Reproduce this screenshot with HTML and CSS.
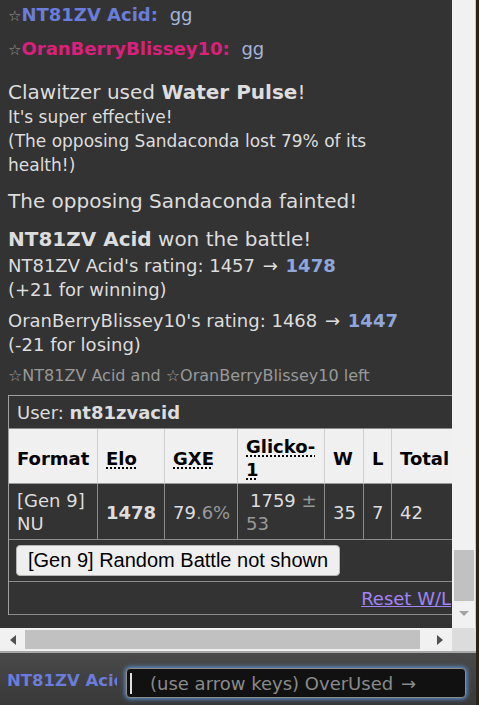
FILE: index.html
```html
<!DOCTYPE html>
<html>
<head>
<meta charset="utf-8">
<link rel="stylesheet" href="styles.css">
</head>
<body>
<div class="app">
  <div class="logpane">
    <div class="logrow">
      <div class="log">
        <div class="inner">
          <div class="chat"><span class="star">☆</span><strong class="blue">NT81ZV Acid:</strong> <em>gg</em></div>
          <div class="chat"><span class="star">☆</span><strong class="pink">OranBerryBlissey10:</strong> <em>gg</em></div>
          <div class="msg m-claw">Clawitzer used <strong>Water Pulse</strong>!<br><small>It's super effective!</small><br><small>(The opposing Sandaconda lost 79% of its health!)</small></div>
          <div class="msg m-faint">The opposing Sandaconda fainted!</div>
          <div class="msg m-won"><strong>NT81ZV Acid</strong> won the battle!</div>
          <div class="raw r1">NT81ZV Acid's rating: 1457 <span class="arr">→</span> <strong class="rate">1478</strong><br>(+21 for winning)</div>
          <div class="raw r2">OranBerryBlissey10's rating: 1468 <span class="arr">→</span> <strong class="rate">1447</strong><br>(-21 for losing)</div>
          <div class="leftmsg">☆NT81ZV Acid and ☆OranBerryBlissey10 left</div>
          <table class="stats">
            <colgroup>
              <col class="c-format"><col class="c-elo"><col class="c-gxe"><col class="c-glicko"><col class="c-w"><col class="c-l"><col class="c-total">
            </colgroup>
            <tr class="user-row"><td colspan="7">User: <strong>nt81zvacid</strong></td></tr>
            <tr class="head-row">
              <th>Format</th>
              <th><abbr class="ab">Elo</abbr></th>
              <th><abbr class="ab">GXE</abbr></th>
              <th><abbr class="ab">Glicko-1</abbr></th>
              <th>W</th>
              <th>L</th>
              <th>Total</th>
            </tr>
            <tr class="data-row">
              <td>[Gen 9] NU</td>
              <td><strong>1478</strong></td>
              <td>79<span class="dim">.6%</span></td>
              <td><span class="glk">1759<span class="dim"> ±</span></span> <span class="dim">53</span></td>
              <td>35</td>
              <td>7</td>
              <td>42</td>
            </tr>
            <tr class="btn-row"><td colspan="7"><button class="hidebtn">[Gen 9] Random Battle not shown</button></td></tr>
            <tr class="reset-row"><td colspan="7"><a class="reset" href="#">Reset W/L</a></td></tr>
          </table>
        </div>
      </div>
      <div class="vscroll">
        <div class="vspace"></div>
        <div class="vthumb"></div>
        <div class="vbtn"><span class="tri-down"></span></div>
      </div>
    </div>
    <div class="hscroll">
      <div class="hbtn"><span class="tri-left"></span></div>
      <div class="hthumb"></div>
      <div class="hspace"></div>
      <div class="hbtn"><span class="tri-right"></span></div>
      <div class="corner"></div>
    </div>
  </div>
  <div class="chatbox">
    <div class="me">NT81ZV Acid</div>
    <div class="textbox"><span class="caret"></span><span class="hint">(use arrow keys) OverUsed <span class="arr">→</span></span></div>
  </div>
</div>
</body>
</html>
```

FILE: styles.css
```css
html, body {
  margin: 0;
  padding: 0;
}
body {
  width: 479px;
  height: 705px;
  overflow: hidden;
  background: #2a2416;
  font-family: "DejaVu Sans", Verdana, sans-serif;
}
.app {
  width: 476px;
  height: 705px;
  display: flex;
  flex-direction: column;
  background: #333;
}
.logpane {
  display: flex;
  flex-direction: column;
  height: 651px;
  flex: none;
}
.logrow {
  display: flex;
  height: 628px;
  flex: none;
}
.log {
  width: 452px;
  flex: none;
  overflow: hidden;
  background: #333;
  color: #ddd;
}
.inner {
  padding: 0 22px 0 8px;
}

/* chat lines */
.chat {
  font-size: 18px;
  line-height: 22px;
  padding: 4px 0 7px;
  white-space: nowrap;
}
.chat .star {
  font-size: 15px;
  color: #999;
}
.chat em {
  font-style: normal;
  color: #a6b5da;
  padding-left: 6px;
}
.blue { color: #6a7cdc; }
.pink { color: #dc1f7b; }

/* battle messages */
.msg {
  font-size: 20px;
  line-height: 24px;
}
.msg small {
  font-size: 17px;
  line-height: 20px;
}
.m-claw { margin-top: 12px; }
.m-faint { margin-top: 13px; }
.m-won { margin-top: 14px; }
.raw {
  font-size: 18px;
  line-height: 24px;
}
.arr {
  margin: 0 2px;
}
.r1 { margin-top: 3px; }
.r2 { margin-top: 7px; }
.rate { color: #8ea6db; }
.leftmsg {
  font-size: 16px;
  line-height: 20px;
  color: #999;
  margin-top: 9px;
  white-space: nowrap;
}

/* stats table */
.stats {
  margin-top: 9px;
  width: 453px;
  table-layout: fixed;
  border-collapse: separate;
  border-spacing: 0;
  border-top: 1px solid #a0a0a0;
  border-left: 1px solid #a0a0a0;
  font-size: 18px;
  line-height: 23px;
  color: #ddd;
}
.c-format { width: 89px; }
.c-elo { width: 67px; }
.c-gxe { width: 73px; }
.c-glicko { width: 87px; }
.c-w { width: 39px; }
.c-l { width: 28px; }
.c-total { width: 69px; }
.stats td, .stats th {
  border-right: 1px solid #8a8a8a;
  border-bottom: 1px solid #8a8a8a;
  padding: 0 8px;
  text-align: left;
  vertical-align: middle;
}
.user-row td {
  padding: 6px 8px 4px;
  line-height: 22px;
}
.head-row th {
  background: #f0f0f0;
  color: #000;
  font-weight: bold;
  padding: 6px 8px 2px;
  height: 46px;
  border-right-color: #cfcfcf;
  border-bottom-color: #9a9a9a;
}
.ab {
  text-decoration: underline dotted;
  text-underline-offset: 3px;
}
.data-row td {
  padding: 5px 8px 4px;
  height: 46px;
}
.glk {
  white-space: nowrap;
  padding-left: 4px;
}
.dim { color: #999; }
.btn-row td {
  padding: 5px 8px 5px 7px;
}
.hidebtn {
  display: block;
  height: 31px;
  margin: 0;
  padding: 0 11px;
  font-family: "Liberation Sans", Arial, sans-serif;
  font-size: 20px;
  color: #000;
  background: #efefef;
  border: 1px solid #b5b5b5;
  border-radius: 4px;
  white-space: nowrap;
}
.reset-row td {
  text-align: right;
  padding: 6px 9px 4px 8px;
  line-height: 22px;
}
.reset {
  color: #a283f8;
  text-decoration: underline;
}

/* vertical scrollbar */
.vscroll {
  width: 23px;
  flex: none;
  display: flex;
  flex-direction: column;
  background: #f1f1f1;
  border-right: 1px solid #cdcdcd;
}
.vspace { flex: 1; }
.vthumb {
  height: 51px;
  margin: 0 1px 0 2px;
  background: #c1c1c1;
}
.vbtn {
  height: 24px;
  padding-bottom: 3px;
  display: flex;
  align-items: center;
  justify-content: center;
}
.tri-down {
  width: 0;
  height: 0;
  border-left: 5px solid transparent;
  border-right: 5px solid transparent;
  border-top: 5px solid #a3a3a3;
}

/* horizontal scrollbar */
.hscroll {
  height: 23px;
  flex: none;
  display: flex;
  background: #f1f1f1;
}
.hbtn {
  width: 24px;
  flex: none;
  display: flex;
  align-items: center;
  justify-content: center;
}
.hscroll .hbtn:first-child { width: 25px; }
.tri-left {
  width: 0;
  height: 0;
  border-top: 5px solid transparent;
  border-bottom: 5px solid transparent;
  border-right: 6px solid #505050;
}
.tri-right {
  width: 0;
  height: 0;
  border-top: 5px solid transparent;
  border-bottom: 5px solid transparent;
  border-left: 6px solid #505050;
}
.hthumb {
  width: 395px;
  flex: none;
  margin: 2px 0;
  background: #c1c1c1;
}
.hspace { flex: 1; }
.corner {
  width: 24px;
  flex: none;
  background: #dcdcdc;
}

/* chat box */
.chatbox {
  flex: 1;
  display: flex;
  align-items: flex-start;
  border-top: 2px solid #a8a8a8;
  background: linear-gradient(#4a4a4a, #383838);
}
.me {
  width: 110px;
  padding-left: 7px;
  margin-top: 17px;
  overflow: hidden;
  white-space: nowrap;
  font-size: 16.5px;
  line-height: 22px;
  font-weight: bold;
  color: #6a7cdc;
}
.textbox {
  margin: 15px 0 0 9px;
  width: 338px;
  height: 28px;
  display: flex;
  align-items: center;
  background: #111;
  border: 1px solid #8a8a8a;
  border-radius: 4px;
  box-shadow: 0 0 4px 1px #5c9ae0;
}
.caret {
  width: 2px;
  height: 21px;
  margin-left: 3px;
  background: #e0e0e0;
}
.hint {
  margin-left: 18px;
  font-size: 18px;
  color: #8a8a8a;
  white-space: nowrap;
}
```
